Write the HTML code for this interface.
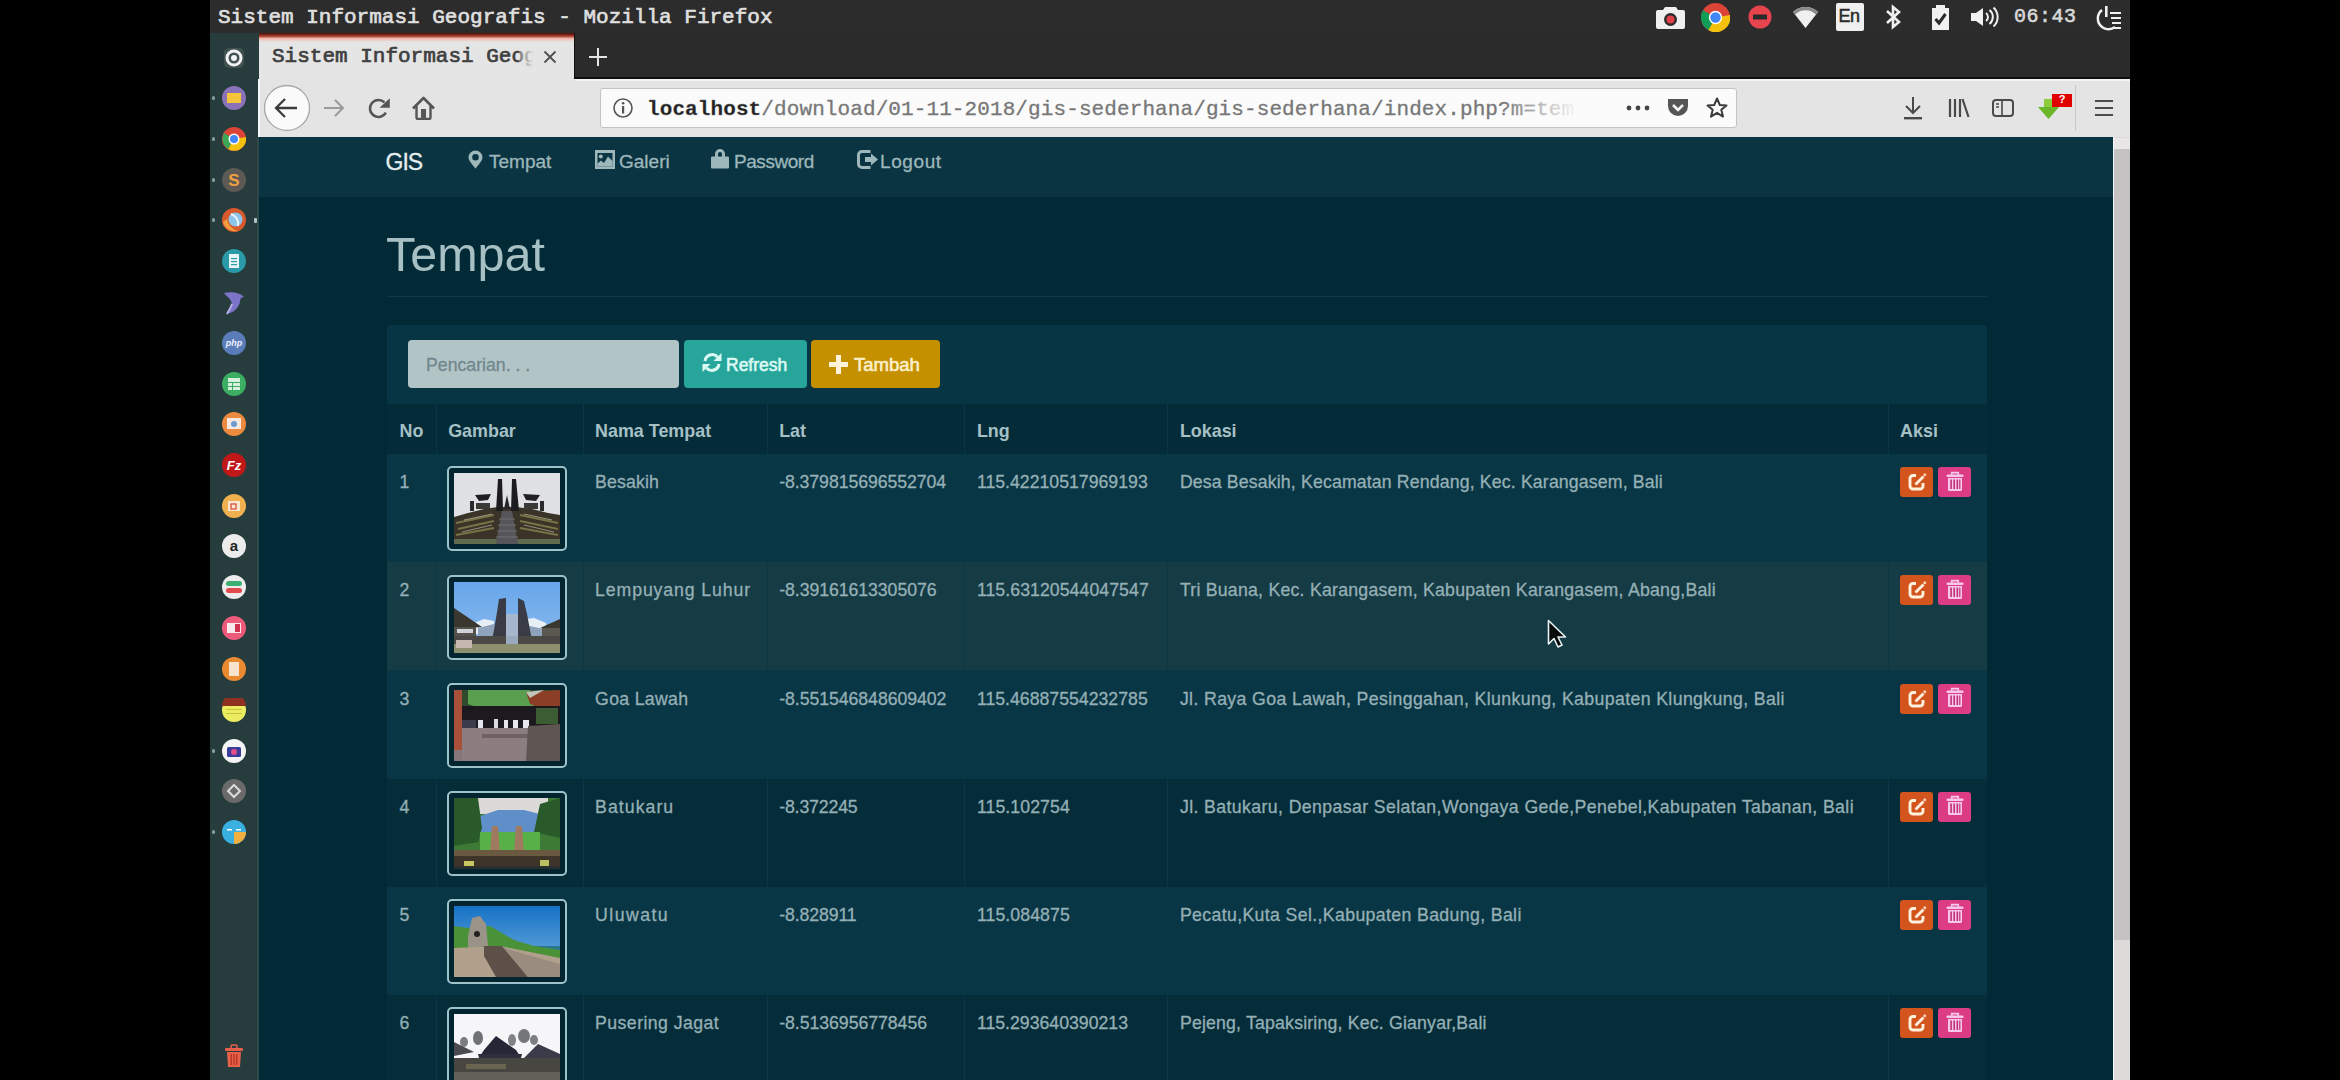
<!DOCTYPE html>
<html><head><meta charset="utf-8">
<style>
*{margin:0;padding:0;box-sizing:border-box}
html,body{width:2340px;height:1080px;background:#000;overflow:hidden;font-family:"Liberation Sans",sans-serif}
div,svg{position:absolute}
.mono{font-family:"Liberation Mono",monospace;white-space:pre}
.nav{top:13.5px;font-size:19px;color:#9db7bb;white-space:pre;-webkit-text-stroke:0.3px #9db7bb}
.txt{font-size:17.7px;color:#95b0b5;white-space:pre;-webkit-text-stroke:0.3px #95b0b5}
.hd{font-size:17.9px;color:#a6c0c6;font-weight:bold;white-space:pre}
.row{left:128px;width:1600px;height:108.2px}
.vl{top:0;width:1px;height:100%;background:#0a3645}
.th{width:120px;height:85px;border:2px solid #9cc2ca;border-radius:5px;background:#022530}
.th svg{left:5px;top:5px;filter:blur(0.7px)}
.btn{width:33px;height:30px;border-radius:3px}
.be{background:#d4541e}.bd{background:#dc3c84}
</style></head><body>
<div style="left:210px;top:0;width:1920px;height:33px;background:#2c2c2c"></div>
<div class="mono" style="left:218px;top:6px;font-size:21px;color:#dedede;-webkit-text-stroke:0.7px #dedede">Sistem Informasi Geografis - Mozilla Firefox</div>
<svg style="left:1655px;top:4px" width="31" height="26" viewBox="0 0 31 26"><path d="M10 3 H21 L23 6 H28 A2 2 0 0 1 30 8 V23 A2 2 0 0 1 28 25 H3 A2 2 0 0 1 1 23 V8 A2 2 0 0 1 3 6 H8 Z" fill="#f0f0f0"/><circle cx="15.5" cy="15.5" r="6.5" fill="#2c2c2c"/><circle cx="15.5" cy="15.5" r="4" fill="#e04048"/></svg>
<svg style="left:1701px;top:3px" width="29" height="29" viewBox="-12 -12 24 24"><circle r="12" fill="#db4437"/><path d="M0 0 L12 -2 A12 12 0 0 1 -6 10.4 Z" fill="#f4c20d"/><path d="M0 0 L-6 10.4 A12 12 0 0 1 -10.4 -6 Z" fill="#0f9d58"/><circle r="5.5" fill="#fff"/><circle r="4.3" fill="#4285f4"/></svg>
<svg style="left:1748px;top:5px" width="24" height="24" viewBox="0 0 24 24"><circle cx="12" cy="12" r="11.5" fill="#e8444e"/><rect x="5" y="9.5" width="14" height="5" fill="#2a2a2a"/></svg>
<svg style="left:1792px;top:5px" width="27" height="24" viewBox="0 0 27 24"><path d="M1 7 A18 18 0 0 1 26 7 L13.5 23 Z" fill="#f0f0f0"/><path d="M1 7 A18 18 0 0 1 26 7 L24 9.5 A15 15 0 0 0 3 9.5 Z" fill="#8a8a8a"/></svg>
<div style="left:1836px;top:3px;width:28px;height:28px;background:#f0f0f0;border-radius:2px"></div><div style="left:1838.5px;top:6px;font-size:18px;color:#2a2a2a;letter-spacing:-0.5px;-webkit-text-stroke:0.5px #2a2a2a">En</div>
<svg style="left:1884px;top:4px" width="20" height="26" viewBox="0 0 20 26"><path d="M3 7 L15 18 L9 23 V3 L15 8 L3 19" stroke="#f0f0f0" stroke-width="2.6" fill="none"/></svg>
<svg style="left:1931px;top:4px" width="19" height="27" viewBox="0 0 19 27"><rect x="1" y="4" width="17" height="22" fill="#f0f0f0"/><rect x="5" y="1" width="9" height="4" fill="#f0f0f0"/><path d="M4.5 15 L8 19 L14.5 10" stroke="#2a2a2a" stroke-width="3" fill="none"/></svg>
<svg style="left:1970px;top:6px" width="31" height="22" viewBox="0 0 31 22"><path d="M1 7 H6 L13 2 V20 L6 15 H1 Z" fill="#f0f0f0"/><path d="M16 7 A5 5 0 0 1 16 15 M19.5 4 A9 9 0 0 1 19.5 18 M23.5 1.5 A13 13 0 0 1 23.5 20.5" stroke="#f0f0f0" stroke-width="2" fill="none"/></svg>
<div class="mono" style="left:2014px;top:5px;font-size:20px;color:#d8d8d8;letter-spacing:0.5px;-webkit-text-stroke:0.6px #d8d8d8">06:43</div>
<svg style="left:2094px;top:5px" width="28" height="26" viewBox="0 0 28 26"><path d="M8 5 A10 10 0 1 0 21 22" stroke="#f0f0f0" stroke-width="2.4" fill="none"/><rect x="11" y="1" width="2.6" height="11" fill="#f0f0f0"/><path d="M16 8 H27 M17 13 H27 M18 18 H27 M19 23 H27" stroke="#f0f0f0" stroke-width="2.2"/></svg>
<div style="left:210px;top:33px;width:49px;height:1047px;background:#273d3d"></div>
<div style="left:257px;top:137px;width:2px;height:943px;background:#2f4747"></div>
<svg style="left:222px;top:46px" width="24" height="24" viewBox="-12 -12 24 24"><rect x="-10" y="-10" width="20" height="20" rx="5" fill="#4b5a58" opacity=".7"/><circle r="7" fill="none" stroke="#f2f2f2" stroke-width="3"/><circle r="3" fill="#f2f2f2"/></svg>
<svg style="left:221.7px;top:86.0px" width="24" height="24" viewBox="-12 -12 24 24"><circle r="12" fill="#8a72b8"/><rect x="-7" y="-5" width="14" height="10" fill="#f6c43a"/></svg>
<svg style="left:221.7px;top:127.0px" width="24" height="24" viewBox="-12 -12 24 24"><circle r="12" fill="#db4437"/><path d="M0 0 L12 -2 A12 12 0 0 1 -6 10 Z" fill="#f4c20d"/><path d="M0 0 L-6 10 A12 12 0 0 1 -10 -6 Z" fill="#3aa757"/><circle r="5.5" fill="#fff"/><circle r="4" fill="#4285f4"/></svg>
<svg style="left:221.7px;top:168.0px" width="24" height="24" viewBox="-12 -12 24 24"><circle r="12" fill="#5d5a56"/><text x="0" y="6" text-anchor="middle" font-family="Liberation Sans" font-weight="bold" font-size="17" fill="#f0a040">S</text></svg>
<svg style="left:221.7px;top:208.0px" width="24" height="24" viewBox="-12 -12 24 24"><circle r="12" fill="#d85a2c"/><circle cx="1.5" cy="-0.5" r="7" fill="#8cc4ea"/><path d="M-3 -6 C2 -4 5 0 4 6" stroke="#e8f2fa" stroke-width="2" fill="none"/><path d="M-11 2 C-9 9 -2 12 4 11 C-2 9 -6 5 -7 -1 Z" fill="#f0a040"/></svg>
<svg style="left:221.7px;top:249.0px" width="24" height="24" viewBox="-12 -12 24 24"><circle r="12" fill="#2a9aa8"/><rect x="-5" y="-7" width="10" height="14" fill="#e8f4f6"/><rect x="-3" y="-3" width="6" height="1.2" fill="#2a9aa8"/><rect x="-3" y="0" width="6" height="1.2" fill="#2a9aa8"/><rect x="-3" y="3" width="6" height="1.2" fill="#2a9aa8"/></svg>
<svg style="left:221px;top:289px" width="26" height="26" viewBox="0 0 26 26"><path d="M3 4 C10 2 20 4 23 8 C18 8 20 12 18 16 C15 22 10 24 6 25 C9 20 12 16 10 12 C8 8 5 7 3 4 Z" fill="#7b74c8"/><path d="M6 25 C8 21 10 19 11 15" stroke="#b6b0e8" stroke-width="2" fill="none"/></svg>
<svg style="left:221.7px;top:331.0px" width="24" height="24" viewBox="-12 -12 24 24"><circle r="12" fill="#5a7cb8"/><text x="0" y="3" text-anchor="middle" font-family="Liberation Sans" font-style="italic" font-weight="bold" font-size="9" fill="#eef">php</text></svg>
<svg style="left:221.7px;top:372.0px" width="24" height="24" viewBox="-12 -12 24 24"><circle r="12" fill="#3cae62"/><rect x="-6" y="-6" width="12" height="12" fill="#d8f0e0"/><rect x="-6" y="-2" width="12" height="1" fill="#3cae62"/><rect x="-6" y="2" width="12" height="1" fill="#3cae62"/><rect x="-2" y="-2" width="1" height="8" fill="#3cae62"/></svg>
<svg style="left:221.7px;top:412.0px" width="24" height="24" viewBox="-12 -12 24 24"><circle r="12" fill="#ec8a40"/><rect x="-7" y="-6" width="14" height="11" fill="#f6e8e0"/><circle r="3" fill="#6a9ad0"/></svg>
<svg style="left:221.7px;top:453.0px" width="24" height="24" viewBox="-12 -12 24 24"><circle r="12" fill="#c01818"/><text x="0" y="5" text-anchor="middle" font-family="Liberation Sans" font-style="italic" font-weight="bold" font-size="13" fill="#fff">Fz</text></svg>
<svg style="left:221.7px;top:494.0px" width="24" height="24" viewBox="-12 -12 24 24"><circle r="12" fill="#f0b050"/><rect x="-6" y="-5" width="12" height="10" fill="#f8e8d0"/><rect x="-3" y="-2" width="5" height="5" fill="none" stroke="#d85040" stroke-width="1.3"/></svg>
<svg style="left:221.7px;top:534.0px" width="24" height="24" viewBox="-12 -12 24 24"><circle r="12" fill="#ececec"/><text x="0" y="5" text-anchor="middle" font-family="Liberation Sans" font-weight="bold" font-size="15" fill="#222">a</text></svg>
<svg style="left:221.7px;top:575.0px" width="24" height="24" viewBox="-12 -12 24 24"><circle r="12" fill="#ececec"/><rect x="-8" y="-6" width="16" height="5" rx="2.5" fill="#3cb070"/><rect x="-8" y="1" width="16" height="5" rx="2.5" fill="#e04a4a"/></svg>
<svg style="left:221.7px;top:616.0px" width="24" height="24" viewBox="-12 -12 24 24"><circle r="12" fill="#ee5a7a"/><rect x="-7" y="-5" width="14" height="10" fill="#fbe8ec"/><rect x="1" y="-4" width="5" height="8" fill="#d03050"/></svg>
<svg style="left:221.7px;top:657.0px" width="24" height="24" viewBox="-12 -12 24 24"><circle r="12" fill="#ea8a30"/><rect x="-5" y="-7" width="10" height="14" fill="#f8e4cc"/></svg>
<svg style="left:221.7px;top:698.0px" width="24" height="24" viewBox="-12 -12 24 24"><circle r="12" fill="#ecec60"/><path d="M-12 -4 A12 12 0 0 1 12 -4 Z" fill="#903020"/><rect x="-8" y="-1" width="16" height="1" fill="#c8c040"/><rect x="-8" y="3" width="16" height="1" fill="#c8c040"/></svg>
<svg style="left:221.7px;top:739.0px" width="24" height="24" viewBox="-12 -12 24 24"><circle r="12" fill="#f4f4f4"/><rect x="-7" y="-4" width="14" height="10" rx="1.5" fill="#3c3c9c"/><circle cy="1" r="3" fill="#e0508a"/></svg>
<svg style="left:221.7px;top:779.0px" width="24" height="24" viewBox="-12 -12 24 24"><circle r="12" fill="#6a6a6a"/><path d="M0 -6 L6 0 L0 6 L-6 0 Z" fill="none" stroke="#dcdcdc" stroke-width="2"/></svg>
<svg style="left:221.7px;top:820.0px" width="24" height="24" viewBox="-12 -12 24 24"><circle r="12" fill="#3ab0e0"/><path d="M0 0 H12 A12 12 0 0 1 0 12 Z" fill="#f0b040"/><rect x="-7" y="-3" width="5" height="1.5" fill="#fff"/><rect x="2" y="-3" width="5" height="1.5" fill="#fff"/></svg>
<svg style="left:223px;top:1044px" width="22" height="24" viewBox="0 0 22 24"><rect x="2" y="4" width="18" height="3" rx="1" fill="#e8604a"/><rect x="8" y="1" width="6" height="4" rx="1" fill="none" stroke="#e8604a" stroke-width="1.5"/><path d="M4 8 H18 L17 23 H5 Z" fill="#e8604a"/><rect x="7.5" y="10" width="1.5" height="11" fill="#b83828"/><rect x="10.3" y="10" width="1.5" height="11" fill="#b83828"/><rect x="13" y="10" width="1.5" height="11" fill="#b83828"/></svg>
<div style="left:211.5px;top:96px;width:3px;height:4px;border-radius:1.5px;background:#86a0a0"></div>
<div style="left:211.5px;top:137px;width:3px;height:4px;border-radius:1.5px;background:#86a0a0"></div>
<div style="left:211.5px;top:178px;width:3px;height:4px;border-radius:1.5px;background:#86a0a0"></div>
<div style="left:211.5px;top:218px;width:3px;height:4px;border-radius:1.5px;background:#86a0a0"></div>
<div style="left:211.5px;top:749px;width:3px;height:4px;border-radius:1.5px;background:#86a0a0"></div>
<div style="left:211.5px;top:830px;width:3px;height:4px;border-radius:1.5px;background:#86a0a0"></div>
<div style="left:254px;top:218px;width:3px;height:5px;border-radius:1px;background:#b0c4c4"></div>
<div style="left:259px;top:33px;width:1871px;height:47px;background:#2b2b2b"></div>
<div style="left:259px;top:33px;width:315px;height:47px;background:#e5e5e5"></div>
<div style="left:259px;top:33px;width:315px;height:9px;background:linear-gradient(#4a0c06 0%,#a8402e 35%,#f2b8ae 62%,#e5e5e5 100%)"></div>
<div style="left:574px;top:33px;width:1px;height:45px;background:#111"></div>
<div style="left:574px;top:77px;width:1556px;height:2px;background:#0e0e0e"></div>
<div class="mono" style="left:272px;top:45px;font-size:21px;color:#404040;-webkit-text-stroke:0.7px #404040">Sistem Informasi Geog</div>
<div style="left:519px;top:43px;width:18px;height:30px;background:linear-gradient(90deg,rgba(229,229,229,0.3),#e5e5e5 80%)"></div>
<div style="left:258px;top:79px;width:1872px;height:58px;background:#e4e4e4"></div>
<div style="left:258px;top:79px;width:2px;height:58px;background:#f6f6f6"></div>
<div style="left:575px;top:79px;width:1555px;height:2px;background:#f4f4f4"></div>
<div style="left:600px;top:88px;width:1137px;height:40px;background:#fbfbfb;border:1px solid #c4c4c4;border-radius:3px"></div>
<div class="mono" style="left:647px;top:98px;font-size:21px;color:#777;letter-spacing:0.1px;-webkit-text-stroke:0.3px #777"><span style="color:#222;font-weight:bold">localhost</span>/download/01-11-2018/gis-sederhana/gis-sederhana/index.php?m=tem</div>
<svg style="left:542px;top:49px" width="16" height="16" viewBox="0 0 16 16"><path d="M2.5 2.5 L13.5 13.5 M13.5 2.5 L2.5 13.5" stroke="#505050" stroke-width="1.8"/></svg>
<svg style="left:587px;top:46px" width="22" height="22" viewBox="0 0 22 22"><path d="M11 2 V20 M2 11 H20" stroke="#e4e4e4" stroke-width="2"/></svg>
<svg style="left:263px;top:84px" width="48" height="48" viewBox="0 0 48 48"><circle cx="24" cy="24" r="22.5" fill="#fafafa" stroke="#a8a8a8" stroke-width="1.3"/><path d="M13 24 H34 M22 15 L13 24 L22 33" stroke="#3c3c3c" stroke-width="2.3" fill="none"/></svg>
<svg style="left:322px;top:97px" width="24" height="22" viewBox="0 0 24 22"><path d="M2 11 H21 M13 3 L21 11 L13 19" stroke="#9a9a9a" stroke-width="2" fill="none"/></svg>
<svg style="left:367px;top:96px" width="24" height="24" viewBox="0 0 24 24"><path d="M17.5 6.4 A8.5 8.5 0 1 0 18.86 16.65" stroke="#555" stroke-width="2.5" fill="none"/><path d="M12.5 11.8 L22.8 2.2 L22.8 11.8 Z" fill="#555"/></svg>
<svg style="left:411px;top:96px" width="25" height="24" viewBox="0 0 25 24"><path d="M2 12.5 L12.5 2 L23 12.5" stroke="#555" stroke-width="2.6" fill="none" stroke-linejoin="round"/><path d="M5.5 10 V21.5 A1.5 1.5 0 0 0 7 23 H18 A1.5 1.5 0 0 0 19.5 21.5 V10" stroke="#555" stroke-width="2.4" fill="none"/><rect x="10" y="13" width="5" height="9" fill="#555"/></svg>
<svg style="left:612px;top:97px" width="22" height="22" viewBox="0 0 22 22"><circle cx="11" cy="11" r="9" fill="none" stroke="#555" stroke-width="1.6"/><rect x="10" y="9" width="2.2" height="7.5" fill="#555"/><circle cx="11.1" cy="6.3" r="1.3" fill="#555"/></svg>
<div style="left:1500px;top:94px;width:80px;height:28px;background:linear-gradient(90deg,rgba(251,251,251,0),rgba(251,251,251,1))"></div>
<svg style="left:1625px;top:100px" width="26" height="16" viewBox="0 0 26 16"><circle cx="4" cy="8" r="2.4" fill="#444"/><circle cx="13" cy="8" r="2.4" fill="#444"/><circle cx="22" cy="8" r="2.4" fill="#444"/></svg>
<svg style="left:1666px;top:97px" width="24" height="22" viewBox="0 0 24 22"><path d="M2 2 H22 V9 A10 10 0 0 1 2 9 Z" fill="#555"/><path d="M7 8 L12 13 L17 8" stroke="#f4f4f4" stroke-width="2.6" fill="none"/></svg>
<svg style="left:1705px;top:96px" width="24" height="24" viewBox="0 0 24 24"><path d="M12 2.5 L14.8 9 L21.5 9.4 L16.3 13.8 L18 20.6 L12 16.8 L6 20.6 L7.7 13.8 L2.5 9.4 L9.2 9 Z" stroke="#3c3c3c" stroke-width="2" fill="none" stroke-linejoin="round"/></svg>
<svg style="left:1901px;top:95px" width="24" height="26" viewBox="0 0 24 26"><path d="M12 2 V18 M5 11 L12 18 L19 11" stroke="#4a4a4a" stroke-width="2" fill="none"/><rect x="3" y="22" width="18" height="2.4" fill="#4a4a4a"/></svg>
<svg style="left:1947px;top:96px" width="24" height="24" viewBox="0 0 24 24"><path d="M3 3 V21 M8 3 V21 M13 3 V21 M15.5 3 L21.5 21" stroke="#4a4a4a" stroke-width="2.2" fill="none"/></svg>
<svg style="left:1991px;top:97px" width="24" height="22" viewBox="0 0 24 22"><rect x="2" y="3" width="20" height="16" rx="3" fill="none" stroke="#4a4a4a" stroke-width="2"/><path d="M11 3 V19 M5 7 H8 M5 10 H8" stroke="#4a4a4a" stroke-width="1.6"/></svg>
<svg style="left:2036px;top:94px" width="40" height="30" viewBox="0 0 40 30"><path d="M8 5 H17 V13 H23 L12.5 25 L2 13 H8 Z" fill="#6ab82a"/><path d="M8 5 H17 V13 H8 Z" fill="#8ccc3a"/><rect x="16" y="-5" width="20" height="18" fill="#e00000"/><text x="26" y="9" text-anchor="middle" font-family="Liberation Sans" font-weight="bold" font-size="11" fill="#fff">?</text></svg>
<div style="left:2075px;top:85px;width:1px;height:46px;background:#c8c8c8"></div>
<svg style="left:2093px;top:98px" width="22" height="20" viewBox="0 0 22 20"><path d="M2 3 H20 M2 10 H20 M2 17 H20" stroke="#4a4a4a" stroke-width="2.2"/></svg>
<div style="left:259px;top:137px;width:1854px;height:943px;background:#022a36;overflow:hidden">
  <div style="left:0;top:0;width:1854px;height:60px;background:#0a3442">
    <div class="nav" style="left:126.5px;top:12px;font-size:23px;letter-spacing:-1px;color:#e4eeee;-webkit-text-stroke:0.3px #e4eeee">GIS</div>
    <div class="nav" style="left:230px">Tempat</div>
    <div class="nav" style="left:360px">Galeri</div>
    <div class="nav" style="left:475px;letter-spacing:-0.45px">Password</div>
    <div class="nav" style="left:621px;letter-spacing:0.6px">Logout</div>
  </div>
  <svg style="left:208.5px;top:12.5px" width="15" height="19" viewBox="0 0 15 19"><path d="M7.5 0.5 A7 7 0 0 1 14.5 7.5 C14.5 11 10 15 7.5 18.8 C5 15 0.5 11 0.5 7.5 A7 7 0 0 1 7.5 0.5 Z M7.5 4 A3.3 3.3 0 1 0 7.5 10.6 A3.3 3.3 0 1 0 7.5 4 Z" fill="#9db7bb" fill-rule="evenodd"/></svg>
<svg style="left:336px;top:13px" width="20" height="19" viewBox="0 0 20 19"><path d="M0 0 H20 V19 H0 Z M2.5 3 V16.5 H17.5 V3 Z" fill="#9db7bb" fill-rule="evenodd"/><circle cx="5.8" cy="6.5" r="2" fill="#9db7bb"/><path d="M2.5 16.5 V13.5 L6 10.5 L9 13 L13 6.5 L17.5 11 V16.5 Z" fill="#9db7bb"/></svg>
<svg style="left:451.5px;top:12px" width="18" height="20" viewBox="0 0 18 20"><path d="M4 8 V5 A5 5 0 0 1 14 5 V8 H11 V5 A2 2 0 0 0 7 5 V8 Z" fill="#9db7bb"/><rect x="0" y="7.5" width="18" height="12" rx="1" fill="#9db7bb"/></svg>
<svg style="left:597.5px;top:13px" width="22" height="19" viewBox="0 0 22 19"><path d="M13.5 1.5 H5 A3.5 3.5 0 0 0 1.5 5 V14 A3.5 3.5 0 0 0 5 17.5 H13.5" stroke="#9db7bb" stroke-width="3" fill="none"/><path d="M8 7 H14 V3.5 L21 9.5 L14 15.5 V12 H8 Z" fill="#9db7bb"/></svg>
  <div style="left:127px;top:89px;font-size:48.5px;color:#a7c0c4;white-space:pre">Tempat</div>
  <div style="left:128px;top:159px;width:1600px;height:1px;background:#0c3a47"></div>
  <div style="left:128px;top:188px;width:1600px;height:900px;background:#083544;border-radius:4px"></div>
  <div style="left:149px;top:203px;width:271px;height:48px;background:#b1c4c6;border-radius:4px"></div>
  <div class="txt" style="left:167px;top:218px;color:#72888d;-webkit-text-stroke:0.3px #72888d">Pencarian. . .</div>
  <div style="left:425px;top:203px;width:123px;height:48px;background:#27a59b;border-radius:4px"></div>
  <svg style="left:443px;top:215px" width="20" height="21" viewBox="0 0 20 21"><path d="M3 9 A7.2 7.2 0 0 1 15.5 5" stroke="#dcfaf4" stroke-width="3" fill="none"/><path d="M19.5 1 V9 H11.5 Z" fill="#dcfaf4"/><path d="M17 12 A7.2 7.2 0 0 1 4.5 16" stroke="#dcfaf4" stroke-width="3" fill="none"/><path d="M0.5 20 V12 H8.5 Z" fill="#dcfaf4"/></svg>
  <div style="left:467px;top:218px;font-size:17.5px;color:#dcfaf4;white-space:pre;-webkit-text-stroke:0.6px #dcfaf4">Refresh</div>
  <div style="left:552px;top:203px;width:129px;height:48px;background:#c49000;border-radius:4px"></div>
  <svg style="left:570px;top:217.5px" width="19" height="19" viewBox="0 0 19 19"><path d="M9.5 0 V19 M0 9.5 H19" stroke="#fcf3d8" stroke-width="5"/></svg>
  <div style="left:595px;top:217px;font-size:18.5px;color:#fcefc8;white-space:pre;-webkit-text-stroke:0.6px #fcefc8">Tambah</div>
<div style="left:128px;top:266.7px;width:1600px;height:50.5px;background:#032b38">
<div class="vl" style="left:48.7px"></div>
<div class="vl" style="left:195.6px"></div>
<div class="vl" style="left:379.7px"></div>
<div class="vl" style="left:577.4px"></div>
<div class="vl" style="left:780.4px"></div>
<div class="vl" style="left:1500.6px"></div>
<div class="hd" style="left:12.5px;top:17px">No</div>
<div class="hd" style="left:61.2px;top:17px">Gambar</div>
<div class="hd" style="left:208.1px;top:17px">Nama Tempat</div>
<div class="hd" style="left:392.2px;top:17px">Lat</div>
<div class="hd" style="left:589.9px;top:17px">Lng</div>
<div class="hd" style="left:792.9px;top:17px">Lokasi</div>
<div class="hd" style="left:1513.1px;top:17px">Aksi</div>
</div>
<div class="row" style="top:317.0px;background:#093645">
<div class="vl" style="left:48.7px"></div>
<div class="vl" style="left:195.6px"></div>
<div class="vl" style="left:379.7px"></div>
<div class="vl" style="left:577.4px"></div>
<div class="vl" style="left:780.4px"></div>
<div class="vl" style="left:1500.6px"></div>
<div class="txt" style="left:12.5px;top:18.2px;letter-spacing:0px">1</div>
<div class="txt" style="left:208.1px;top:18.2px;letter-spacing:0.15px">Besakih</div>
<div class="txt" style="left:392.2px;top:18.2px;letter-spacing:-0.076px">-8.379815696552704</div>
<div class="txt" style="left:589.9px;top:18.2px;letter-spacing:0.0px">115.42210517969193</div>
<div class="txt" style="left:792.9px;top:18.2px;letter-spacing:0.151px">Desa Besakih, Kecamatan Rendang, Kec. Karangasem, Bali</div>
<div class="th" style="left:60.2px;top:12.4px"><svg width="106" height="71" viewBox="0 0 106 71" preserveAspectRatio="none"><rect width="106" height="71" fill="#dfe1e4"/>
<polygon points="0,44 14,40 30,36 44,34 62,34 78,36 94,40 106,42 106,71 0,71" fill="#3a3428"/>
<path d="M2 50 L40 42 M4 56 L40 48 M2 62 L40 55 M66 42 L104 50 M66 48 L104 56 M66 55 L104 62" stroke="#8a8850" stroke-width="2.2" opacity=".75"/>
<path d="M10 47 L38 41 M70 41 L98 47 M8 59 L38 52 M70 52 L100 59" stroke="#c8c8b0" stroke-width="1.2" opacity=".6"/>
<polygon points="0,66 106,66 106,71 0,71" fill="#606a4c"/>
<polygon points="44,6 48,6 49,38 42,38" fill="#1c1c20"/>
<polygon points="58,6 62,6 65,38 57,38" fill="#1c1c20"/>
<polygon points="53,22 56,36 50,36" fill="#26262a"/>
<polygon points="21,22 37,21 34,27 25,28" fill="#202024"/>
<polygon points="69,21 86,22 82,28 72,27" fill="#202024"/>
<rect x="16" y="28" width="4" height="10" fill="#2a2a2a"/><rect x="86" y="28" width="4" height="10" fill="#2a2a2a"/>
<rect x="22" y="30" width="14" height="6" fill="#3c3a36"/><rect x="70" y="30" width="14" height="6" fill="#3c3a36"/>
<polygon points="48,38 58,38 64,71 42,71" fill="#56565a"/>
<path d="M45 46 H61 M44 52 H62 M43 58 H63 M42 64 H64" stroke="#707074" stroke-width="1"/></svg></div>
<div class="btn be" style="left:1512.8px;top:13.2px"><svg style="left:8px;top:6px" width="19" height="18" viewBox="0 0 19 18"><path d="M8 2.5 H5 A3 3 0 0 0 2 5.5 V13 A3 3 0 0 0 5 16 H12 A3 3 0 0 0 15 13 V10" stroke="#fdf0dc" stroke-width="2.9" fill="none"/><path d="M7.5 11.5 L15.5 3.5" stroke="#fdf0dc" stroke-width="2.8"/><circle cx="16.8" cy="1.8" r="1.5" fill="#fbd0b8"/></svg></div>
<div class="btn bd" style="left:1551px;top:13.2px"><svg style="left:8px;top:2.5px" width="18" height="24" viewBox="0 0 18 24"><path d="M5.8 4.8 V2.6 H12.2 V4.8" stroke="#f8c8ec" stroke-width="1.8" fill="none"/><rect x="0.5" y="4.5" width="17" height="2.5" rx="1" fill="#f8c8ec"/><path d="M2 8 H16 V19.5 A1.5 1.5 0 0 1 14.5 21 H3.5 A1.5 1.5 0 0 1 2 19.5 Z" fill="#f8c8ec"/><rect x="4.3" y="9.5" width="1.6" height="9.5" fill="#c03078"/><rect x="7.4" y="9.5" width="1.6" height="9.5" fill="#c03078"/><rect x="10.5" y="9.5" width="1.6" height="9.5" fill="#c03078"/><rect x="13.2" y="9.5" width="1.2" height="9.5" fill="#c03078"/></svg></div>
</div>
<div class="row" style="top:425.2px;background:#153b45">
<div class="vl" style="left:48.7px"></div>
<div class="vl" style="left:195.6px"></div>
<div class="vl" style="left:379.7px"></div>
<div class="vl" style="left:577.4px"></div>
<div class="vl" style="left:780.4px"></div>
<div class="vl" style="left:1500.6px"></div>
<div class="txt" style="left:12.5px;top:18.2px;letter-spacing:0px">2</div>
<div class="txt" style="left:208.1px;top:18.2px;letter-spacing:0.886px">Lempuyang Luhur</div>
<div class="txt" style="left:392.2px;top:18.2px;letter-spacing:-0.062px">-8.39161613305076</div>
<div class="txt" style="left:589.9px;top:18.2px;letter-spacing:0.059px">115.63120544047547</div>
<div class="txt" style="left:792.9px;top:18.2px;letter-spacing:0.242px">Tri Buana, Kec. Karangasem, Kabupaten Karangasem, Abang,Bali</div>
<div class="th" style="left:60.2px;top:12.4px"><svg width="106" height="71" viewBox="0 0 106 71" preserveAspectRatio="none"><defs><linearGradient id="s2" x1="0" y1="0" x2="0" y2="1"><stop offset="0" stop-color="#68a6ea"/><stop offset="1" stop-color="#8cbcee"/></linearGradient></defs>
<rect width="106" height="71" fill="url(#s2)"/>
<polygon points="18,42 30,37 40,39 40,52 18,52" fill="#e6eef6"/>
<polygon points="66,38 80,36 92,41 92,52 66,52" fill="#e6eef6"/>
<polygon points="24,46 40,42 66,42 90,47 90,56 24,56" fill="#8fa4bc"/>
<rect x="52" y="32" width="12" height="31" fill="#a6b6cc"/>
<polygon points="0,26 28,45 0,47" fill="#3a3630"/>
<rect x="0" y="45" width="22" height="16" fill="#55524c"/>
<rect x="3" y="47" width="16" height="4" fill="#cfd4d8"/>
<polygon points="106,37 86,46 106,48" fill="#3a3630"/>
<rect x="88" y="46" width="18" height="15" fill="#5a5850"/>
<polygon points="45,17 52,16 52,62 37,62 40,48 43,30" fill="#393c46"/>
<polygon points="64,16 70,19 73,32 76,48 79,62 64,62" fill="#393c46"/>
<rect x="0" y="54" width="106" height="9" fill="#4a4946"/>
<rect x="52" y="54" width="12" height="8" fill="#9aaac0"/>
<rect x="0" y="62" width="106" height="9" fill="#8c9070"/>
<rect x="2" y="58" width="16" height="8" fill="#c4b8b0"/></svg></div>
<div class="btn be" style="left:1512.8px;top:13.2px"><svg style="left:8px;top:6px" width="19" height="18" viewBox="0 0 19 18"><path d="M8 2.5 H5 A3 3 0 0 0 2 5.5 V13 A3 3 0 0 0 5 16 H12 A3 3 0 0 0 15 13 V10" stroke="#fdf0dc" stroke-width="2.9" fill="none"/><path d="M7.5 11.5 L15.5 3.5" stroke="#fdf0dc" stroke-width="2.8"/><circle cx="16.8" cy="1.8" r="1.5" fill="#fbd0b8"/></svg></div>
<div class="btn bd" style="left:1551px;top:13.2px"><svg style="left:8px;top:2.5px" width="18" height="24" viewBox="0 0 18 24"><path d="M5.8 4.8 V2.6 H12.2 V4.8" stroke="#f8c8ec" stroke-width="1.8" fill="none"/><rect x="0.5" y="4.5" width="17" height="2.5" rx="1" fill="#f8c8ec"/><path d="M2 8 H16 V19.5 A1.5 1.5 0 0 1 14.5 21 H3.5 A1.5 1.5 0 0 1 2 19.5 Z" fill="#f8c8ec"/><rect x="4.3" y="9.5" width="1.6" height="9.5" fill="#c03078"/><rect x="7.4" y="9.5" width="1.6" height="9.5" fill="#c03078"/><rect x="10.5" y="9.5" width="1.6" height="9.5" fill="#c03078"/><rect x="13.2" y="9.5" width="1.2" height="9.5" fill="#c03078"/></svg></div>
</div>
<div class="row" style="top:533.4px;background:#093645">
<div class="vl" style="left:48.7px"></div>
<div class="vl" style="left:195.6px"></div>
<div class="vl" style="left:379.7px"></div>
<div class="vl" style="left:577.4px"></div>
<div class="vl" style="left:780.4px"></div>
<div class="vl" style="left:1500.6px"></div>
<div class="txt" style="left:12.5px;top:18.2px;letter-spacing:0px">3</div>
<div class="txt" style="left:208.1px;top:18.2px;letter-spacing:0.312px">Goa Lawah</div>
<div class="txt" style="left:392.2px;top:18.2px;letter-spacing:-0.059px">-8.551546848609402</div>
<div class="txt" style="left:589.9px;top:18.2px;letter-spacing:0.0px">115.46887554232785</div>
<div class="txt" style="left:792.9px;top:18.2px;letter-spacing:0.378px">Jl. Raya Goa Lawah, Pesinggahan, Klunkung, Kabupaten Klungkung, Bali</div>
<div class="th" style="left:60.2px;top:12.4px"><svg width="106" height="71" viewBox="0 0 106 71" preserveAspectRatio="none"><rect width="106" height="71" fill="#86787a"/>
<rect x="0" y="0" width="106" height="20" fill="#2f4a2c"/>
<polygon points="14,0 76,0 80,16 64,22 30,20 14,14" fill="#5a9e50"/>
<polygon points="72,2 106,0 106,24 76,14" fill="#8c3e26"/>
<polygon points="72,2 90,0 76,8" fill="#c0c4bc"/>
<rect x="8" y="16" width="98" height="22" fill="#1c1a1e"/>
<rect x="0" y="0" width="8" height="60" fill="#a8503a"/>
<rect x="82" y="18" width="22" height="16" fill="#3c5c34"/>
<rect x="24" y="30" width="5" height="14" fill="#e4e4ec"/><rect x="40" y="29" width="4" height="9" fill="#dcdce4"/>
<rect x="50" y="30" width="4" height="9" fill="#e8e8ee"/><rect x="59" y="30" width="5" height="9" fill="#e8e8ee"/>
<rect x="69" y="30" width="6" height="9" fill="#e8e8ee"/><rect x="90" y="38" width="6" height="6" fill="#e0e0e8"/>
<rect x="8" y="30" width="14" height="14" fill="#3a3c4c"/>
<rect x="8" y="38" width="98" height="33" fill="#8c7e80"/>
<rect x="28" y="44" width="50" height="4" fill="#6e6264"/>
<polygon points="74,36 106,34 106,71 72,71" fill="#5e5652"/></svg></div>
<div class="btn be" style="left:1512.8px;top:13.2px"><svg style="left:8px;top:6px" width="19" height="18" viewBox="0 0 19 18"><path d="M8 2.5 H5 A3 3 0 0 0 2 5.5 V13 A3 3 0 0 0 5 16 H12 A3 3 0 0 0 15 13 V10" stroke="#fdf0dc" stroke-width="2.9" fill="none"/><path d="M7.5 11.5 L15.5 3.5" stroke="#fdf0dc" stroke-width="2.8"/><circle cx="16.8" cy="1.8" r="1.5" fill="#fbd0b8"/></svg></div>
<div class="btn bd" style="left:1551px;top:13.2px"><svg style="left:8px;top:2.5px" width="18" height="24" viewBox="0 0 18 24"><path d="M5.8 4.8 V2.6 H12.2 V4.8" stroke="#f8c8ec" stroke-width="1.8" fill="none"/><rect x="0.5" y="4.5" width="17" height="2.5" rx="1" fill="#f8c8ec"/><path d="M2 8 H16 V19.5 A1.5 1.5 0 0 1 14.5 21 H3.5 A1.5 1.5 0 0 1 2 19.5 Z" fill="#f8c8ec"/><rect x="4.3" y="9.5" width="1.6" height="9.5" fill="#c03078"/><rect x="7.4" y="9.5" width="1.6" height="9.5" fill="#c03078"/><rect x="10.5" y="9.5" width="1.6" height="9.5" fill="#c03078"/><rect x="13.2" y="9.5" width="1.2" height="9.5" fill="#c03078"/></svg></div>
</div>
<div class="row" style="top:641.6px;background:#042c39">
<div class="vl" style="left:48.7px"></div>
<div class="vl" style="left:195.6px"></div>
<div class="vl" style="left:379.7px"></div>
<div class="vl" style="left:577.4px"></div>
<div class="vl" style="left:780.4px"></div>
<div class="vl" style="left:1500.6px"></div>
<div class="txt" style="left:12.5px;top:18.2px;letter-spacing:0px">4</div>
<div class="txt" style="left:208.1px;top:18.2px;letter-spacing:1.043px">Batukaru</div>
<div class="txt" style="left:392.2px;top:18.2px;letter-spacing:-0.15px">-8.372245</div>
<div class="txt" style="left:589.9px;top:18.2px;letter-spacing:0.078px">115.102754</div>
<div class="txt" style="left:792.9px;top:18.2px;letter-spacing:0.396px">Jl. Batukaru, Denpasar Selatan,Wongaya Gede,Penebel,Kabupaten Tabanan, Bali</div>
<div class="th" style="left:60.2px;top:12.4px"><svg width="106" height="71" viewBox="0 0 106 71" preserveAspectRatio="none"><rect width="106" height="71" fill="#3c7a36"/>
<rect x="14" y="0" width="80" height="16" fill="#dcdad8"/>
<polygon points="26,18 44,12 70,12 86,16 86,34 26,34" fill="#5f8fc8"/>
<polygon points="0,0 24,0 28,30 24,44 0,48" fill="#2b5a2a"/>
<polygon points="106,0 86,6 80,34 106,40" fill="#2b5a2a"/>
<polygon points="26,34 86,34 86,52 26,52" fill="#58b048"/>
<polygon points="38,28 44,28 46,55 36,55" fill="#a07a60"/>
<polygon points="62,28 68,28 70,55 60,55" fill="#a07a60"/>
<rect x="0" y="52" width="106" height="6" fill="#6a5840"/>
<rect x="0" y="58" width="106" height="10" fill="#3f3428"/>
<rect x="10" y="63" width="10" height="7" fill="#c8c860"/><rect x="86" y="62" width="9" height="7" fill="#b8c060"/>
<rect x="0" y="68" width="106" height="3" fill="#2a3030"/></svg></div>
<div class="btn be" style="left:1512.8px;top:13.2px"><svg style="left:8px;top:6px" width="19" height="18" viewBox="0 0 19 18"><path d="M8 2.5 H5 A3 3 0 0 0 2 5.5 V13 A3 3 0 0 0 5 16 H12 A3 3 0 0 0 15 13 V10" stroke="#fdf0dc" stroke-width="2.9" fill="none"/><path d="M7.5 11.5 L15.5 3.5" stroke="#fdf0dc" stroke-width="2.8"/><circle cx="16.8" cy="1.8" r="1.5" fill="#fbd0b8"/></svg></div>
<div class="btn bd" style="left:1551px;top:13.2px"><svg style="left:8px;top:2.5px" width="18" height="24" viewBox="0 0 18 24"><path d="M5.8 4.8 V2.6 H12.2 V4.8" stroke="#f8c8ec" stroke-width="1.8" fill="none"/><rect x="0.5" y="4.5" width="17" height="2.5" rx="1" fill="#f8c8ec"/><path d="M2 8 H16 V19.5 A1.5 1.5 0 0 1 14.5 21 H3.5 A1.5 1.5 0 0 1 2 19.5 Z" fill="#f8c8ec"/><rect x="4.3" y="9.5" width="1.6" height="9.5" fill="#c03078"/><rect x="7.4" y="9.5" width="1.6" height="9.5" fill="#c03078"/><rect x="10.5" y="9.5" width="1.6" height="9.5" fill="#c03078"/><rect x="13.2" y="9.5" width="1.2" height="9.5" fill="#c03078"/></svg></div>
</div>
<div class="row" style="top:749.8px;background:#093645">
<div class="vl" style="left:48.7px"></div>
<div class="vl" style="left:195.6px"></div>
<div class="vl" style="left:379.7px"></div>
<div class="vl" style="left:577.4px"></div>
<div class="vl" style="left:780.4px"></div>
<div class="vl" style="left:1500.6px"></div>
<div class="txt" style="left:12.5px;top:18.2px;letter-spacing:0px">5</div>
<div class="txt" style="left:208.1px;top:18.2px;letter-spacing:1.433px">Uluwatu</div>
<div class="txt" style="left:392.2px;top:18.2px;letter-spacing:-0.113px">-8.828911</div>
<div class="txt" style="left:589.9px;top:18.2px;letter-spacing:0.078px">115.084875</div>
<div class="txt" style="left:792.9px;top:18.2px;letter-spacing:0.368px">Pecatu,Kuta Sel.,Kabupaten Badung, Bali</div>
<div class="th" style="left:60.2px;top:12.4px"><svg width="106" height="71" viewBox="0 0 106 71" preserveAspectRatio="none"><defs><linearGradient id="s5" x1="0" y1="0" x2="0" y2="1"><stop offset="0" stop-color="#1672c4"/><stop offset="1" stop-color="#7ab4e4"/></linearGradient></defs>
<rect width="106" height="71" fill="url(#s5)"/>
<rect x="74" y="40" width="32" height="6" fill="#2a7890"/>
<polygon points="0,20 14,22 36,20 60,34 80,40 106,44 106,56 0,56" fill="#4a9238"/>
<polygon points="14,30 18,12 26,10 32,18 34,40 14,42" fill="#9a9488"/>
<circle cx="23" cy="28" r="3" fill="#222"/>
<polygon points="0,42 46,40 106,52 106,71 0,71" fill="#b0a08c"/>
<polygon points="30,40 48,40 74,71 42,71 30,50" fill="#5c5048"/>
<polygon points="48,40 56,44 106,58 106,71 74,71" fill="#9a8c7e"/></svg></div>
<div class="btn be" style="left:1512.8px;top:13.2px"><svg style="left:8px;top:6px" width="19" height="18" viewBox="0 0 19 18"><path d="M8 2.5 H5 A3 3 0 0 0 2 5.5 V13 A3 3 0 0 0 5 16 H12 A3 3 0 0 0 15 13 V10" stroke="#fdf0dc" stroke-width="2.9" fill="none"/><path d="M7.5 11.5 L15.5 3.5" stroke="#fdf0dc" stroke-width="2.8"/><circle cx="16.8" cy="1.8" r="1.5" fill="#fbd0b8"/></svg></div>
<div class="btn bd" style="left:1551px;top:13.2px"><svg style="left:8px;top:2.5px" width="18" height="24" viewBox="0 0 18 24"><path d="M5.8 4.8 V2.6 H12.2 V4.8" stroke="#f8c8ec" stroke-width="1.8" fill="none"/><rect x="0.5" y="4.5" width="17" height="2.5" rx="1" fill="#f8c8ec"/><path d="M2 8 H16 V19.5 A1.5 1.5 0 0 1 14.5 21 H3.5 A1.5 1.5 0 0 1 2 19.5 Z" fill="#f8c8ec"/><rect x="4.3" y="9.5" width="1.6" height="9.5" fill="#c03078"/><rect x="7.4" y="9.5" width="1.6" height="9.5" fill="#c03078"/><rect x="10.5" y="9.5" width="1.6" height="9.5" fill="#c03078"/><rect x="13.2" y="9.5" width="1.2" height="9.5" fill="#c03078"/></svg></div>
</div>
<div class="row" style="top:858.0px;background:#042c39">
<div class="vl" style="left:48.7px"></div>
<div class="vl" style="left:195.6px"></div>
<div class="vl" style="left:379.7px"></div>
<div class="vl" style="left:577.4px"></div>
<div class="vl" style="left:780.4px"></div>
<div class="vl" style="left:1500.6px"></div>
<div class="txt" style="left:12.5px;top:18.2px;letter-spacing:0px">6</div>
<div class="txt" style="left:208.1px;top:18.2px;letter-spacing:0.431px">Pusering Jagat</div>
<div class="txt" style="left:392.2px;top:18.2px;letter-spacing:-0.047px">-8.5136956778456</div>
<div class="txt" style="left:589.9px;top:18.2px;letter-spacing:0.0px">115.293640390213</div>
<div class="txt" style="left:792.9px;top:18.2px;letter-spacing:0.189px">Pejeng, Tapaksiring, Kec. Gianyar,Bali</div>
<div class="th" style="left:60.2px;top:12.4px"><svg width="106" height="71" viewBox="0 0 106 71" preserveAspectRatio="none"><rect width="106" height="71" fill="#f6f6f8"/>
<ellipse cx="10" cy="28" rx="4" ry="5" fill="#7a7e80"/><ellipse cx="24" cy="24" rx="5" ry="7" fill="#6e7274"/><ellipse cx="58" cy="26" rx="4" ry="6" fill="#808486"/><ellipse cx="70" cy="22" rx="6" ry="7" fill="#74787a"/><ellipse cx="80" cy="26" rx="4" ry="5" fill="#7c8082"/>
<polygon points="0,28 20,38 0,42" fill="#4a4a50"/>
<polygon points="42,22 62,36 66,42 26,42 30,36" fill="#262636"/>
<polygon points="24,40 68,40 66,48 26,48" fill="#2e2e3c"/>
<polygon points="84,30 106,40 106,50 64,50" fill="#3a3a48"/>
<rect x="0" y="44" width="106" height="22" fill="#484640"/>
<rect x="12" y="50" width="40" height="5" fill="#6a6450"/>
<rect x="0" y="58" width="106" height="8" fill="#626058"/>
<rect x="0" y="66" width="106" height="5" fill="#5a8a40"/></svg></div>
<div class="btn be" style="left:1512.8px;top:13.2px"><svg style="left:8px;top:6px" width="19" height="18" viewBox="0 0 19 18"><path d="M8 2.5 H5 A3 3 0 0 0 2 5.5 V13 A3 3 0 0 0 5 16 H12 A3 3 0 0 0 15 13 V10" stroke="#fdf0dc" stroke-width="2.9" fill="none"/><path d="M7.5 11.5 L15.5 3.5" stroke="#fdf0dc" stroke-width="2.8"/><circle cx="16.8" cy="1.8" r="1.5" fill="#fbd0b8"/></svg></div>
<div class="btn bd" style="left:1551px;top:13.2px"><svg style="left:8px;top:2.5px" width="18" height="24" viewBox="0 0 18 24"><path d="M5.8 4.8 V2.6 H12.2 V4.8" stroke="#f8c8ec" stroke-width="1.8" fill="none"/><rect x="0.5" y="4.5" width="17" height="2.5" rx="1" fill="#f8c8ec"/><path d="M2 8 H16 V19.5 A1.5 1.5 0 0 1 14.5 21 H3.5 A1.5 1.5 0 0 1 2 19.5 Z" fill="#f8c8ec"/><rect x="4.3" y="9.5" width="1.6" height="9.5" fill="#c03078"/><rect x="7.4" y="9.5" width="1.6" height="9.5" fill="#c03078"/><rect x="10.5" y="9.5" width="1.6" height="9.5" fill="#c03078"/><rect x="13.2" y="9.5" width="1.2" height="9.5" fill="#c03078"/></svg></div>
</div>
</div>
<div style="left:2113px;top:137px;width:17px;height:943px;background:#dedad9"></div>
<div style="left:2113px;top:137px;width:1px;height:943px;background:#f4f8f8"></div>
<div style="left:2114px;top:138px;width:16px;height:11px;background:#e8e6e6"></div>
<div style="left:2114px;top:149px;width:16px;height:791px;background:#c4c2c2"></div>
<svg style="left:1546px;top:619px" width="22" height="32" viewBox="0 0 22 32"><path d="M2.5 1.5 L2.5 25 L8 19.5 L12 28 L16 26 L12 18 L19.5 18 Z" fill="#0a0a0a" stroke="#e8f4f4" stroke-width="1.6" stroke-linejoin="round"/></svg>
</body></html>
